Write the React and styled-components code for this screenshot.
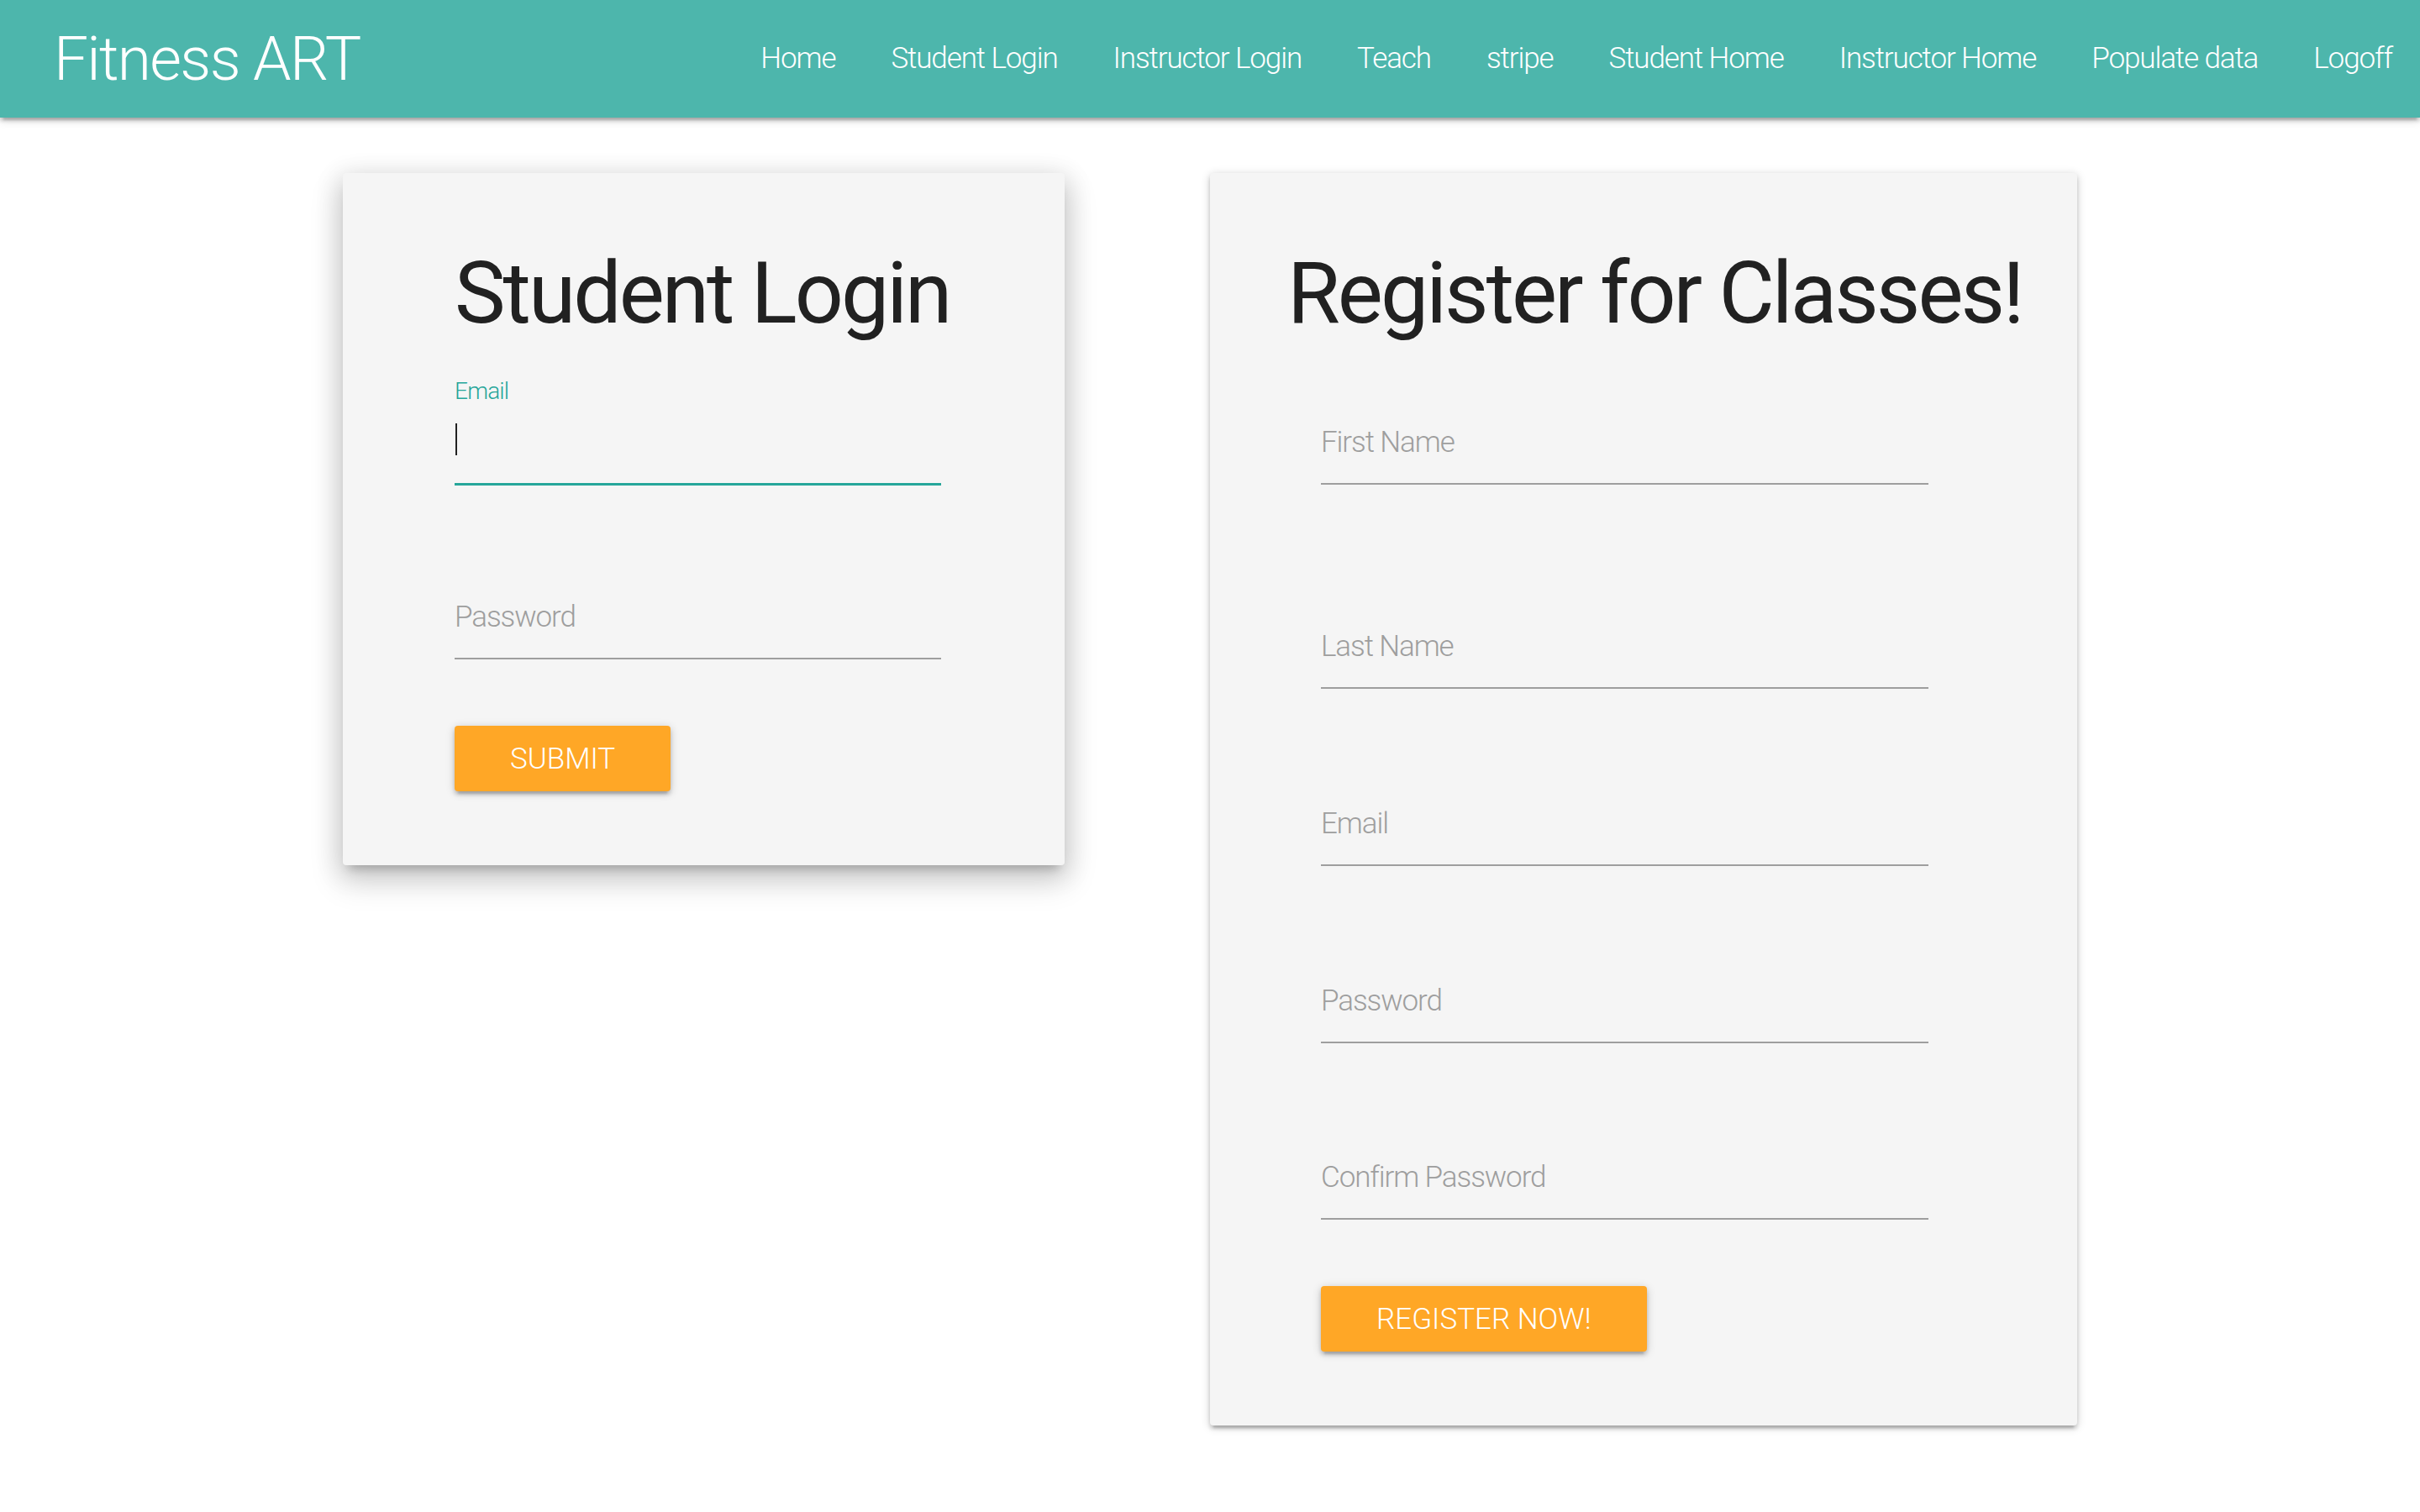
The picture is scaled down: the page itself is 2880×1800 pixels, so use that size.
import styled, { createGlobalStyle } from 'styled-components';

const Global = createGlobalStyle`
  body {
    margin: 0;
    background: #ffffff;
    font-family: Roboto, "Liberation Sans", sans-serif;
    font-weight: 300;
    color: rgba(0, 0, 0, 0.87);
  }
  * { box-sizing: border-box; }
`

const links = ["Home", "Student Login", "Instructor Login", "Teach", "stripe", "Student Home", "Instructor Home", "Populate data", "Logoff"]

export default function App() {
  return (
    <>
      <Global />
      <Nav>
        <Logo>Fitness ART</Logo>
        <Menu>
          {links.map((l) => (
            <MenuLink key={l}>{l}</MenuLink>
          ))}
        </Menu>
      </Nav>

      <Row>
        <Card $width={859} $pad={133} $lifted>
          <Title>Student Login</Title>
          <Fields $indent={0} $width={579}>
            <Field $top={65}>
              <Label $active>Email</Label>
              <Input $focused />
              <Caret />
            </Field>
            <Field $top={101}>
              <Label>Password</Label>
              <Input type="password" />
            </Field>
            <Button>Submit</Button>
          </Fields>
        </Card>

        <Card $width={1032} $pad={92}>
          <Title>Register for Classes!</Title>
          <Fields $indent={40} $width={723}>
            <Field $top={65}>
              <Label>First Name</Label>
              <Input />
            </Field>
            <Field $top={136}>
              <Label>Last Name</Label>
              <Input />
            </Field>
            <Field $top={104}>
              <Label>Email</Label>
              <Input />
            </Field>
            <Field $top={104}>
              <Label>Password</Label>
              <Input type="password" />
            </Field>
            <Field $top={103}>
              <Label>Confirm Password</Label>
              <Input type="password" />
            </Field>
            <Button>Register Now!</Button>
          </Fields>
        </Card>
      </Row>
    </>
  )
}

const Nav = styled.nav`
display: flex;
align-items: center;
justify-content: space-between;
height: 140px;
padding-left: 64px;
background-color: #4db6ac;
color: white;
box-shadow: 0 4px 4px 0 rgba(0,0,0,.14), 0 7px 2px -4px rgba(0,0,0,.12), 0 2px 11px 0 rgba(0,0,0,.2);
position: relative;
z-index: 1;
`

const Logo = styled.div`
font-size: 73px;
line-height: 140px;
font-weight: 300;
letter-spacing: -1.7px;
`

const Menu = styled.ul`
display: flex;
margin: 0;
padding: 0;
list-style: none;
`

const MenuLink = styled.li`
padding: 0 33px;
font-size: 35px;
line-height: 140px;
font-weight: 300;
letter-spacing: -1.1px;
`

const Row = styled.main`
display: flex;
justify-content: center;
align-items: flex-start;
gap: 173px;
margin-top: 66px;
padding-bottom: 100px;
`

const Card = styled.section`
width: ${p => p.$width}px;
padding: 87px 0 88px ${p => p.$pad}px;
background-color: #f5f5f5;
border-radius: 4px;
box-shadow: ${p => p.$lifted
  ? '0 17px 37px 4px rgba(0,0,0,.14), 0 7px 31px 4px rgba(0,0,0,.12), 0 11px 11px -7px rgba(0,0,0,.2)'
  : '0 4px 4px 0 rgba(0,0,0,.14), 0 7px 2px -4px rgba(0,0,0,.12), 0 2px 11px 0 rgba(0,0,0,.2)'};
`

const Title = styled.h3`
margin: 0;
font-size: 102px;
line-height: 112px;
font-weight: 400;
letter-spacing: -3px;
color: #212121;
white-space: nowrap;
`

const Fields = styled.form`
display: flex;
flex-direction: column;
align-items: flex-start;
margin-left: ${p => p.$indent}px;
width: ${p => p.$width}px;
`

const Field = styled.div`
position: relative;
width: 100%;
margin-top: ${p => p.$top}px;
`

const Label = styled.label`
position: absolute;
left: 0;
bottom: ${p => p.$active ? 97 : 33}px;
font-size: ${p => p.$active ? 28 : 35}px;
line-height: 1;
font-weight: 300;
letter-spacing: ${p => p.$active ? -0.8 : -1.1}px;
color: ${p => p.$active ? '#26a69a' : '#9e9e9e'};
pointer-events: none;
`

const Input = styled.input`
display: block;
width: 100%;
height: 107px;
margin: 0;
padding: 0;
background: transparent;
border: none;
border-bottom: 2px solid ${p => p.$focused ? '#26a69a' : '#9e9e9e'};
box-shadow: ${p => p.$focused ? '0 1px 0 0 #26a69a' : 'none'};
font-family: inherit;
font-size: 35px;
outline: none;
`

const Caret = styled.span`
position: absolute;
left: 1px;
bottom: 35px;
width: 2px;
height: 38px;
background-color: #212121;
`

const Button = styled.button`
margin-top: 79px;
height: 78px;
padding: 0 66px;
border: none;
border-radius: 4px;
background-color: #ffa726;
color: white;
font-family: inherit;
font-size: 35px;
font-weight: 300;
letter-spacing: 0;
text-transform: uppercase;
box-shadow: 0 4px 4px 0 rgba(0,0,0,.14), 0 7px 2px -4px rgba(0,0,0,.12), 0 2px 11px 0 rgba(0,0,0,.2);
`
